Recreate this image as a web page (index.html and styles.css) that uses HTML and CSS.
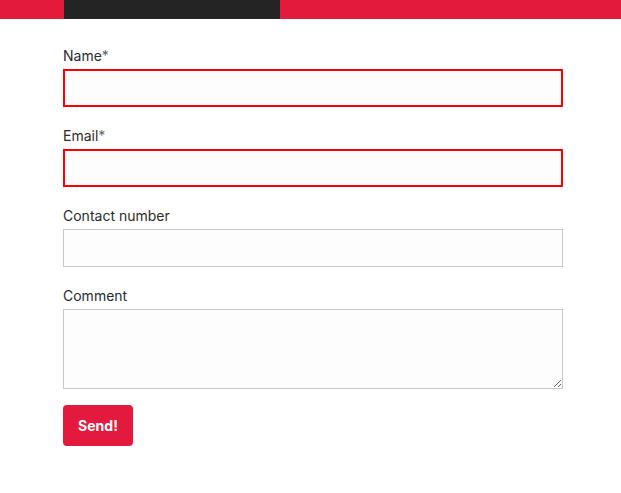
FILE: index.html
```html
<!DOCTYPE html>
<html>
<head>
<meta charset="utf-8">
<link rel="stylesheet" href="styles.css">
</head>
<body>
<div class="topbar"><div class="topbar-dark"></div></div>
<form class="form">
  <div class="field">
    <label class="label">Name<span class="req">*</span></label>
    <input class="input input-error" type="text">
  </div>
  <div class="field">
    <label class="label">Email<span class="req">*</span></label>
    <input class="input input-error" type="text">
  </div>
  <div class="field">
    <label class="label">Contact number</label>
    <input class="input" type="text">
  </div>
  <div class="field">
    <label class="label">Comment</label>
    <textarea class="input textarea"></textarea>
  </div>
  <button class="send" type="button">Send!</button>
</form>
</body>
</html>
```
FILE: styles.css
```css
* { box-sizing: border-box; }
body {
  margin: 0;
  background: #fff;
  font-family: "Inter", "Liberation Sans", sans-serif;
  color: #222;
}
.topbar {
  height: 19px;
  background: #e31a3c;
  padding-left: 64px;
}
.topbar-dark {
  width: 216px;
  height: 100%;
  background: #242424;
}
.form {
  width: 500px;
  margin-left: 63px;
  padding-top: 27px;
  display: flex;
  flex-direction: column;
}
.field {
  display: flex;
  flex-direction: column;
  gap: 3px;
  margin-bottom: 19px;
}
.label {
  font-size: 14px;
  line-height: 20px;
  color: #2a2a2a;
}
.req {
  color: #5a6470;
}
.input {
  display: block;
  width: 500px;
  height: 38px;
  border: 1px solid #c8c8c8;
  background: #fdfdfd;
  font: inherit;
  margin: 0;
  border-radius: 0;
  outline: none;
}
.input-error {
  border: 2px solid #ff0000;
}
.textarea {
  height: 80px;
  resize: vertical;
}
.send {
  align-self: flex-start;
  margin-top: -3px;
  width: 70px;
  height: 41px;
  border: none;
  border-radius: 4px;
  background: #e31a3d;
  color: #fff;
  font-family: "Inter", "Liberation Sans", sans-serif;
  font-weight: 700;
  font-size: 14px;
  cursor: pointer;
}
```
